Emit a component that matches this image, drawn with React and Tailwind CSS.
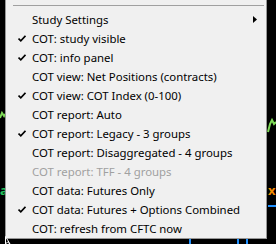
import React from "react";

const items = [
  { label: "Study Settings", sub: true },
  { label: "COT: study visible", check: true },
  { label: "COT: info panel", check: true },
  { label: "COT view: Net Positions (contracts)" },
  { label: "COT view: COT Index (0-100)", check: true },
  { label: "COT report: Auto" },
  { label: "COT report: Legacy - 3 groups", check: true },
  { label: "COT report: Disaggregated - 4 groups" },
  { label: "COT report: TFF - 4 groups", disabled: true },
  { label: "COT data: Futures Only" },
  { label: "COT data: Futures + Options Combined", check: true },
  { label: "COT: refresh from CFTC now" },
];

function Check() {
  return (
    <svg width="8" height="7" viewBox="0 0 8 7" className="block">
      <path d="M0.5 3.5 L2.8 5.8 L7.5 0.8" fill="none" stroke="#000" strokeWidth="1.7" />
    </svg>
  );
}

export default function App() {
  return (
    <div className="relative w-[276px] h-[244px] bg-black overflow-hidden" style={{ fontFamily: '"Noto Sans", sans-serif' }}>
      {/* chart bits behind */}
      <svg className="absolute left-0 top-0" width="276" height="244">
        <path d="M0 118 L2 113 L4 116 L5 114" stroke="#7ed957" strokeWidth="2" fill="none" />
        <path d="M268 132 L270 124 L272 120 L274 124 L276 122" stroke="#7ed957" strokeWidth="2" fill="none" />
        <line x1="268" y1="206" x2="276" y2="206" stroke="#1e90ff" strokeWidth="2" />
        <line x1="190" y1="239" x2="190" y2="244" stroke="#1e90ff" strokeWidth="2" />
        <line x1="238" y1="239" x2="238" y2="244" stroke="#1e90ff" strokeWidth="2" />
        <line x1="247" y1="239" x2="247" y2="244" stroke="#1e90ff" strokeWidth="2" />
      </svg>
      <div className="absolute left-0 top-[184px] text-[13px] font-bold text-[#22c55e] leading-none">a</div>
      <div className="absolute left-[268px] top-[184px] text-[13px] font-bold text-[#f28c00] leading-none">x</div>

      {/* menu */}
      <div className="absolute left-[5px] top-[-10px] w-[262px] h-[249px] bg-[#f0f0f0] border border-[#979797] pt-[14px]">
        <div className="ml-[7px] mr-[2px] h-px bg-[#a0a0a0]" />
        <div className="mt-[4px] flex flex-col">
          {items.map((it, i) => (
            <div key={i} className="relative h-[19px] flex items-center">
              <div className="w-[26px] flex justify-end pr-[6px]">{it.check ? <Check /> : null}</div>
              <span className={"text-[11.4px] leading-none whitespace-nowrap " + (it.disabled ? "text-[#a0a0a0]" : "text-black")}>{it.label}</span>
              {it.sub ? (
                <svg className="absolute right-[9px] top-[6px]" width="4" height="7" viewBox="0 0 4 7">
                  <path d="M0 0 L4 3.5 L0 7 Z" fill="#000" />
                </svg>
              ) : null}
            </div>
          ))}
        </div>
      </div>
      {/* cursor */}
      <svg className="absolute left-[5px] top-[236px]" width="8" height="8" viewBox="0 0 8 8">
        <path d="M0.5 0.5 L0.5 8 L2.5 6 L5 8 Z" fill="#000" stroke="#fff" strokeWidth="1" />
      </svg>
    </div>
  );
}
